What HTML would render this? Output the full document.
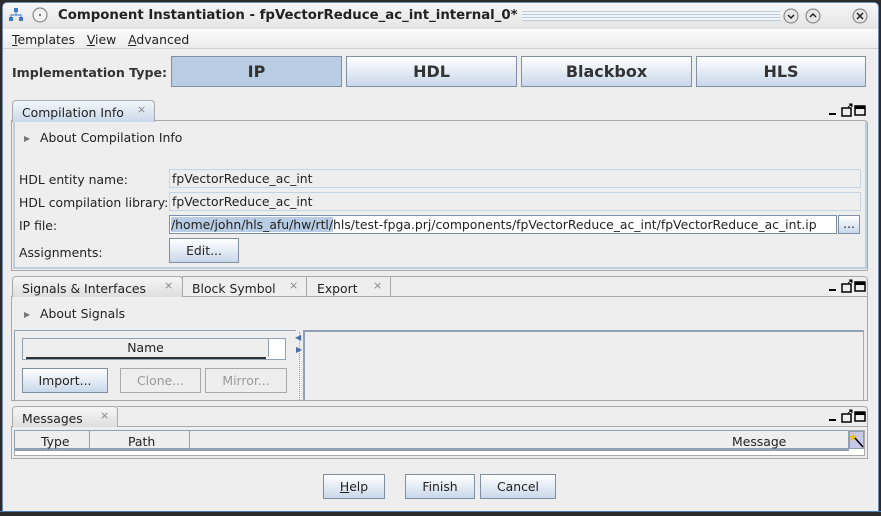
<!DOCTYPE html>
<html><head><style>
*{box-sizing:border-box;margin:0;padding:0}
body{width:881px;height:516px;background:#2b2b2b;position:relative;overflow:hidden;font-family:"DejaVu Sans","Liberation Sans",sans-serif;font-size:12.4px;color:#222}
.a{position:absolute}
.win{left:2px;top:2px;width:877px;height:510px;background:#eeeeee;border:1px solid #6d8db5;border-radius:5px 5px 0 0}
.title{left:3px;top:3px;width:875px;height:26px;background:linear-gradient(#f6f6f6,#e4e4e4);border-radius:4px 4px 0 0}
.bt{background:linear-gradient(#ffffff,#c9d8ea);border:1px solid #7f8fa3;text-align:center;color:#222}
.big{font-weight:bold;font-size:16px;line-height:29px;color:#333}
.field{background:#eeeeee;border:1px solid #c6d3e3;padding-left:2px;line-height:17px}
.x{color:#888;font-size:11px}
.frame{border:1px solid #a9a9a9}
</style></head><body>
<div class="a win"></div>
<div class="a title"></div>
<svg class="a" style="left:8px;top:7px" width="16" height="16"><rect x="6" y="1" width="4" height="4" fill="#3a78c8"/><rect x="1" y="10" width="4" height="4" fill="#3a78c8"/><rect x="11" y="10" width="4" height="4" fill="#3a78c8"/><path d="M8 5V8M3 10V8H13V10" stroke="#3a78c8" fill="none"/></svg>
<svg class="a" style="left:32px;top:7px" width="16" height="16"><circle cx="8" cy="8" r="7" fill="#f2f2f2" stroke="#777"/><circle cx="8" cy="8" r="1" fill="#555"/></svg>
<div class="a" style="left:58px;top:8px;font-weight:bold;font-size:13.3px;color:#222;white-space:nowrap">Component Instantiation - fpVectorReduce_ac_int_internal_0*</div>
<div class="a" style="left:522px;top:9px;width:258px;height:12px;background:repeating-linear-gradient(#f4f4f4 0 2px,#b9c9dc 2px 3px)"></div>
<svg class="a" style="left:782px;top:7px" width="90" height="18"><circle cx="9" cy="9" r="7" fill="#e6e6e6" stroke="#777"/><path d="M6 8l3 3 3-3" stroke="#222" fill="none" stroke-width="1.5"/><circle cx="31" cy="9" r="7" fill="#e6e6e6" stroke="#777"/><path d="M28 10l3-3 3 3" stroke="#222" fill="none" stroke-width="1.5"/><circle cx="78" cy="9" r="7" fill="#e6e6e6" stroke="#777"/><path d="M75 6l6 6M81 6l-6 6" stroke="#222" stroke-width="1.5"/></svg>
<div class="a" style="left:3px;top:29px;width:875px;height:20px;background:linear-gradient(#fbfbfb,#ececec);border-bottom:1px solid #d0d0d0"></div>
<div class="a" style="left:12px;top:32px"><u>T</u>emplates&nbsp;&nbsp;&nbsp;<u>V</u>iew&nbsp;&nbsp;&nbsp;<u>A</u>dvanced</div>
<div class="a" style="left:12px;top:65px;font-weight:bold;font-size:12.6px;color:#333">Implementation Type:</div>
<div class="a big" style="left:171px;top:56px;width:171px;height:31px;background:#b8cce4;border:1px solid #7f8fa3;text-align:center">IP</div>
<div class="a bt big" style="left:346px;top:56px;width:171px;height:31px">HDL</div>
<div class="a bt big" style="left:521px;top:56px;width:171px;height:31px">Blackbox</div>
<div class="a bt big" style="left:696px;top:56px;width:170px;height:31px">HLS</div>

<div class="a frame" style="left:11px;top:120px;width:857px;height:151px;border-radius:0 4px 0 0"></div>
<div class="a" style="left:12px;top:100px;width:143px;height:22px;background:linear-gradient(#f2f6fa,#c9d9ea);border:1px solid #a9a9a9;border-bottom:none;border-radius:4px 4px 0 0"></div>
<div class="a" style="left:22px;top:105px">Compilation Info</div><div class="a x" style="left:137px;top:103px">⨯</div>
<svg class="a" style="left:826px;top:103px" width="40" height="16"><rect x="3" y="10" width="7" height="2" fill="#000"/><rect x="16" y="5" width="9" height="8" fill="none" stroke="#000" stroke-width="1.5"/><path d="M22 4l3-2M23 1h3v3" stroke="#000"/><rect x="29" y="3" width="10" height="9" fill="none" stroke="#000" stroke-width="1.5"/><rect x="29" y="3" width="10" height="3" fill="#000"/></svg>
<div class="a" style="left:13px;top:122px;width:854px;height:147px;border:2px solid #c0cfe0;border-top:none"></div>
<div class="a" style="left:24px;top:134px;font-size:8px;color:#777">▶</div>
<div class="a" style="left:40px;top:130px">About Compilation Info</div>
<div class="a" style="left:19px;top:172px">HDL entity name:</div>
<div class="a field" style="left:169px;top:169px;width:692px;height:19px">fpVectorReduce_ac_int</div>
<div class="a" style="left:19px;top:195px">HDL compilation library:</div>
<div class="a field" style="left:169px;top:192px;width:692px;height:19px">fpVectorReduce_ac_int</div>
<div class="a" style="left:19px;top:218px">IP file:</div>
<div class="a" style="left:169px;top:215px;width:668px;height:19px;background:#fff;border:1px solid #7f8fa3;line-height:17px;padding-left:1px;white-space:nowrap;overflow:hidden"><span style="background:#b8cce4">/home/john/hls_afu/hw/rtl/</span>hls/test-fpga.prj/components/fpVectorReduce_ac_int/fpVectorReduce_ac_int.ip</div>
<div class="a bt" style="left:838px;top:215px;width:22px;height:19px;line-height:15px">...</div>
<div class="a" style="left:19px;top:245px">Assignments:</div>
<div class="a bt" style="left:169px;top:238px;width:70px;height:25px;line-height:23px">Edit...</div>

<div class="a frame" style="left:11px;top:296px;width:857px;height:105px"></div>
<div class="a" style="left:12px;top:276px;width:171px;height:21px;background:linear-gradient(#f6f6f6,#dedede);border:1px solid #a9a9a9;border-bottom:none;border-radius:4px 4px 0 0"></div>
<div class="a" style="left:22px;top:281px">Signals &amp; Interfaces</div><div class="a x" style="left:164px;top:279px">⨯</div>
<div class="a" style="left:182px;top:276px;width:125px;height:21px;border:1px solid #a9a9a9;border-bottom:none"></div>
<div class="a" style="left:192px;top:281px">Block Symbol</div><div class="a x" style="left:289px;top:279px">⨯</div>
<div class="a" style="left:306px;top:276px;width:85px;height:21px;border:1px solid #a9a9a9;border-bottom:none"></div>
<div class="a" style="left:317px;top:281px">Export</div><div class="a x" style="left:373px;top:279px">⨯</div>
<div class="a" style="left:390px;top:276px;width:478px;height:21px;border-top:1px solid #a9a9a9;border-right:1px solid #a9a9a9;border-radius:0 4px 0 0"></div>
<svg class="a" style="left:826px;top:279px" width="40" height="16"><rect x="3" y="10" width="7" height="2" fill="#000"/><rect x="16" y="5" width="9" height="8" fill="none" stroke="#000" stroke-width="1.5"/><path d="M22 4l3-2M23 1h3v3" stroke="#000"/><rect x="29" y="3" width="10" height="9" fill="none" stroke="#000" stroke-width="1.5"/><rect x="29" y="3" width="10" height="3" fill="#000"/></svg>
<div class="a" style="left:24px;top:310px;font-size:8px;color:#777">▶</div>
<div class="a" style="left:40px;top:306px">About Signals</div>
<div class="a" style="left:14px;top:330px;width:282px;height:70px;border-top:1px solid #8fa0b5;border-left:1px solid #8fa0b5"></div>
<div class="a" style="left:22px;top:338px;width:264px;height:22px;border:1px solid #8fa0b5;background:#fff"></div>
<div class="a" style="left:23px;top:339px;width:246px;height:18px;background:#eee;border-right:1px solid #8fa0b5;text-align:center;line-height:18px">Name</div>
<div class="a" style="left:26px;top:357px;width:240px;height:2px;background:#333"></div>
<div class="a bt" style="left:22px;top:368px;width:86px;height:25px;line-height:23px">Import...</div>
<div class="a" style="left:120px;top:368px;width:81px;height:25px;border:1px solid #aaa;color:#999;text-align:center;line-height:23px">Clone...</div>
<div class="a" style="left:205px;top:368px;width:82px;height:25px;border:1px solid #aaa;color:#999;text-align:center;line-height:23px">Mirror...</div>
<div class="a" style="left:299px;top:332px;width:0;height:68px;border-left:1px dotted #8fa0b5"></div>
<div class="a" style="left:295px;top:333px;font-size:8px;color:#4a6fa5">◀</div>
<div class="a" style="left:296px;top:345px;font-size:8px;color:#4a6fa5">▶</div>
<div class="a" style="left:303px;top:330px;width:561px;height:71px;border:2px solid #8fa0b5;border-right:1px solid #aaa;border-bottom:none"></div>

<div class="a frame" style="left:11px;top:426px;width:857px;height:33px"></div>
<div class="a" style="left:12px;top:406px;width:106px;height:21px;background:linear-gradient(#f6f6f6,#dedede);border:1px solid #a9a9a9;border-bottom:none;border-radius:4px 4px 0 0"></div>
<div class="a" style="left:22px;top:411px">Messages</div><div class="a x" style="left:100px;top:409px">⨯</div>
<div class="a" style="left:117px;top:406px;width:751px;height:21px;border-top:1px solid #a9a9a9;border-right:1px solid #a9a9a9;border-radius:0 4px 0 0"></div>
<svg class="a" style="left:826px;top:409px" width="40" height="16"><rect x="3" y="10" width="7" height="2" fill="#000"/><rect x="16" y="5" width="9" height="8" fill="none" stroke="#000" stroke-width="1.5"/><path d="M22 4l3-2M23 1h3v3" stroke="#000"/><rect x="29" y="3" width="10" height="9" fill="none" stroke="#000" stroke-width="1.5"/><rect x="29" y="3" width="10" height="3" fill="#000"/></svg>
<div class="a" style="left:14px;top:430px;width:851px;height:26px;border:1px solid #aaa;background:#fff"></div>
<div class="a" style="left:14px;top:430px;width:835px;height:21px;background:#eee;border:1px solid #8fa0b5;border-bottom:3px solid #8fa0b5"></div>
<div class="a" style="left:89px;top:431px;width:1px;height:18px;background:#8fa0b5"></div>
<div class="a" style="left:189px;top:431px;width:1px;height:18px;background:#8fa0b5"></div>
<div class="a" style="left:41px;top:434px">Type</div>
<div class="a" style="left:128px;top:434px">Path</div>
<div class="a" style="left:732px;top:434px">Message</div>
<div class="a" style="left:849px;top:431px;width:15px;height:18px;background:#c8c8e8;border:1px solid #8fa0b5"></div>
<svg class="a" style="left:849px;top:431px" width="16" height="18"><path d="M4 2l1 3 3 0-2 2 1 3-3-2-3 2 1-3-2-2 3 0z" fill="#f0c000"/><path d="M6 7l8 9" stroke="#000" stroke-width="1.5"/></svg>

<div class="a bt" style="left:323px;top:474px;width:62px;height:25px;line-height:24px"><u>H</u>elp</div>
<div class="a bt" style="left:405px;top:474px;width:70px;height:25px;line-height:24px">Finish</div>
<div class="a bt" style="left:480px;top:474px;width:76px;height:25px;line-height:24px">Cancel</div>
<div class="a" style="left:0;top:511px;width:881px;height:5px;background:#2b2b2b;border-top:1px solid #4a7cc0"></div>
</body></html>
